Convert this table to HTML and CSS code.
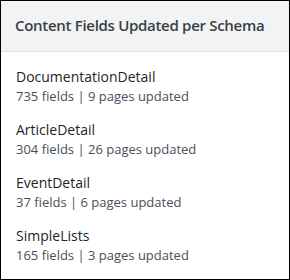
FILE: index.html
```html
<!DOCTYPE html>
<html lang="en">

<head>
    <meta charset="UTF-8" />
    <meta name="viewport" content="width=device-width, initial-scale=1.0" />
    <title>Schema Updates</title>
    <link rel="stylesheet" href="styles.css">
</head>

<body>
    <div class="card">
        <div class="card__header">Content Fields Updated per Schema</div>
        <ul class="schema-list">
            <li class="schema-item">
                <div class="schema-name">DocumentationDetail</div>
                <div class="schema-stats">735 fields | 9 pages updated</div>
            </li>
            <li class="schema-item">
                <div class="schema-name">ArticleDetail</div>
                <div class="schema-stats">304 fields | 26 pages updated</div>
            </li>
            <li class="schema-item">
                <div class="schema-name">EventDetail</div>
                <div class="schema-stats">37 fields | 6 pages updated</div>
            </li>
            <li class="schema-item">
                <div class="schema-name">SimpleLists</div>
                <div class="schema-stats">165 fields | 3 pages updated</div>
            </li>
        </ul>
    </div>
</body>

</html>
```

FILE: styles.css
```css
body {
    font-family: "Open Sans", "Noto Sans", sans-serif;
    margin: 0;
    padding: 0;
    background-color: #fff;
}

.card {
    width: 290px;
    height: 280px;
    box-sizing: border-box;
    border: 1px solid #000;
    background-color: #fff;
}

.card__header {
    height: 51px;
    box-sizing: border-box;
    padding: 14px 14px 0;
    background-color: #f2f3f5;
    border-bottom: 1px solid #dde2e8;
    font-size: 15px;
    font-weight: 600;
    letter-spacing: -0.3px;
    color: #3a3f44;
    /* Header title on one line */
    white-space: nowrap;
}

.schema-list {
    list-style: none;
    margin: 0;
    padding: 13.5px 15px 0;
}

.schema-item {
    height: 53.3px;
}

.schema-name {
    font-size: 14px;
    color: #212529;
    line-height: 21px;
}

.schema-stats {
    font-size: 13px;
    color: #495057;
    line-height: 18px;
}
```
